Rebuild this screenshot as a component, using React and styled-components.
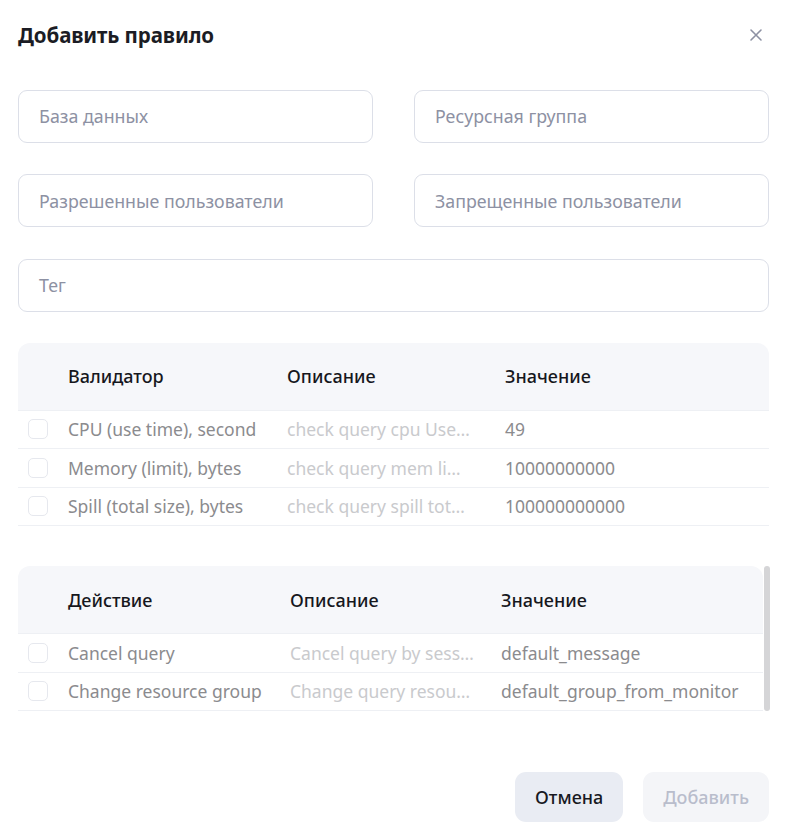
import React from "react";
import styled, { createGlobalStyle } from "styled-components";

const Global = createGlobalStyle`
  html, body { margin: 0; padding: 0; background: #fff; }
  body { font-family: "Noto Sans", "Lato", sans-serif; }
  * { box-sizing: border-box; }
`;

const Modal = styled.div`
  width: 790px;
  padding: 0 21px 18px 18px;
  display: flex;
  flex-direction: column;
`;

const Header = styled.div`
  height: 69.5px;
  display: flex;
  align-items: center;
  justify-content: space-between;
`;

const Title = styled.h2`
  margin: 0;
  font-size: 20.5px;
  font-weight: 700;
  color: #1b1c24;
  letter-spacing: -0.1px;
  line-height: 1;
`;

const Close = styled.button`
  border: none;
  background: none;
  padding: 0;
  width: 28px;
  height: 28px;
  display: flex;
  align-items: center;
  justify-content: center;
  margin-right: -1px;
  cursor: pointer;
`;

const Fields = styled.div`
  margin-top: 20px;
  display: grid;
  grid-template-columns: 1fr 1fr;
  column-gap: 41px;
  row-gap: 31.5px;
`;

const Field = styled.div`
  grid-column: ${(p) => (p.$full ? "1 / -1" : "auto")};
  height: 53px;
  border: 1px solid #dcdfe8;
  border-radius: 9px;
  display: flex;
  align-items: center;
  padding-left: 20px;
  font-size: 17.8px;
  color: #8d91a3;
`;

const TableWrap = styled.div`
  margin-top: ${(p) => p.$mt}px;
  display: flex;
  gap: 1px;
`;

const Table = styled.div`
  flex: 1;
  display: flex;
  flex-direction: column;
`;

const Row = styled.div`
  display: grid;
  grid-template-columns: ${(p) => p.$cols};
  align-items: center;
  height: ${(p) => (p.$head ? 68 : 38.5)}px;
  background: ${(p) => (p.$head ? "#f6f7fa" : "#fff")};
  border-radius: ${(p) => (p.$head ? "12px 12px 0 0" : "0")};
  border-bottom: 1px solid #eef0f4;
`;

const HeadCell = styled.div`
  font-size: 18px;
  color: #16171d;
  font-weight: 500;
`;

const Cell = styled.div`
  font-size: 17.5px;
  color: ${(p) => (p.$light ? "#c9cacd" : "#8b8b8e")};
  white-space: nowrap;
`;

const Check = styled.span`
  width: 20px;
  height: 20px;
  margin-left: 10px;
  border: 1px solid #e6e8ee;
  border-radius: 5px;
  display: block;
`;

const Scrollbar = styled.div`
  width: 6px;
  background: #d5d5d7;
  border-radius: 3px;
  margin-right: -1px;
`;

const Footer = styled.div`
  margin-top: 60.5px;
  display: flex;
  justify-content: flex-end;
  gap: 20px;
`;

const Button = styled.button`
  height: 50px;
  padding: 0 20px;
  border: none;
  border-radius: 11px;
  font-family: inherit;
  font-size: 18px;
  font-weight: 500;
  background: ${(p) => (p.$primary ? "#f4f5f8" : "#e9ecf3")};
  color: ${(p) => (p.$primary ? "#b9bdcc" : "#18191f")};
`;

const cols1 = "50px 219px 218px 1fr";
const cols2 = "50px 222px 211px 1fr";

const validators = [
  ["CPU (use time), second", "check query cpu Use…", "49"],
  ["Memory (limit), bytes", "check query mem li…", "10000000000"],
  ["Spill (total size), bytes", "check query spill tot…", "100000000000"],
];

const actions = [
  ["Cancel query", "Cancel query by sess…", "default_message"],
  ["Change resource group", "Change query resou…", "default_group_from_monitor"],
];

export default function App() {
  return (
    <>
      <Global />
      <Modal>
        <Header>
          <Title>Добавить правило</Title>
          <Close aria-label="close">
            <svg width="14" height="14" viewBox="0 0 14 14">
              <path d="M2 2 L12 12 M12 2 L2 12" stroke="#8d91a3" strokeWidth="1.6" strokeLinecap="round" />
            </svg>
          </Close>
        </Header>
        <Fields>
          <Field>База данных</Field>
          <Field>Ресурсная группа</Field>
          <Field>Разрешенные пользователи</Field>
          <Field>Запрещенные пользователи</Field>
          <Field $full>Тег</Field>
        </Fields>

        <TableWrap $mt={31}>
          <Table>
            <Row $head $cols={cols1}>
              <span />
              <HeadCell>Валидатор</HeadCell>
              <HeadCell>Описание</HeadCell>
              <HeadCell>Значение</HeadCell>
            </Row>
            {validators.map((r) => (
              <Row key={r[0]} $cols={cols1}>
                <Check />
                <Cell>{r[0]}</Cell>
                <Cell $light>{r[1]}</Cell>
                <Cell>{r[2]}</Cell>
              </Row>
            ))}
          </Table>
        </TableWrap>

        <TableWrap $mt={40}>
          <Table>
            <Row $head $cols={cols2}>
              <span />
              <HeadCell>Действие</HeadCell>
              <HeadCell>Описание</HeadCell>
              <HeadCell>Значение</HeadCell>
            </Row>
            {actions.map((r) => (
              <Row key={r[0]} $cols={cols2}>
                <Check />
                <Cell>{r[0]}</Cell>
                <Cell $light>{r[1]}</Cell>
                <Cell>{r[2]}</Cell>
              </Row>
            ))}
          </Table>
          <Scrollbar />
        </TableWrap>

        <Footer>
          <Button>Отмена</Button>
          <Button $primary>Добавить</Button>
        </Footer>
      </Modal>
    </>
  );
}
